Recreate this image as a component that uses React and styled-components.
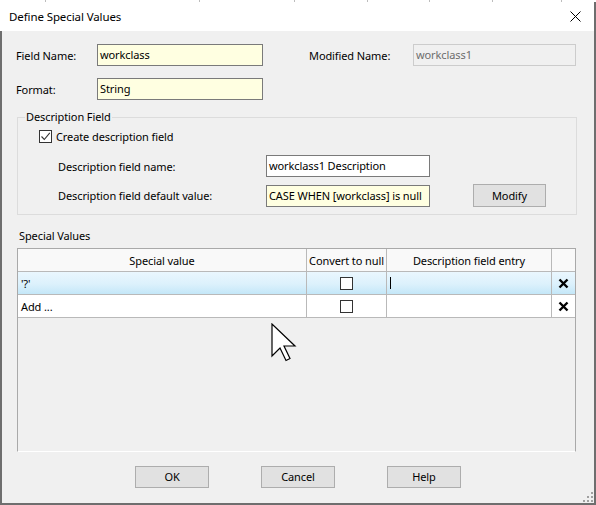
import React from 'react';
import styled, { createGlobalStyle } from 'styled-components';

const Global = createGlobalStyle`
  html, body { margin: 0; padding: 0; background: #ffffff; }
  body {
    font-family: "Noto Sans", "Liberation Sans", sans-serif;
    font-size: 11px;
    letter-spacing: -0.1px;
    color: #000;
  }
  * { box-sizing: border-box; }
`;

const Screen = styled.div`
  position: relative;
  width: 596px;
  height: 505px;
  display: flex;
  flex-direction: column;
  overflow: hidden;
`;

const BehindStrip = styled.div`
  height: 2px;
  display: flex;
  background: #ffffff;
  flex: none;
`;

const BehindCell = styled.div`
  flex: none;
  width: ${p => p.$w}px;
  border-right: 1px solid #bdbdbd;
`;

const Window = styled.div`
  flex: 1;
  display: flex;
  flex-direction: column;
  border-right: 2px solid #6e6e6e;
  border-bottom: 2px solid #6e6e6e;
`;

const TitleBar = styled.div`
  height: 29px;
  flex: none;
  background: #ffffff;
  display: flex;
  align-items: center;
  justify-content: space-between;
  padding-left: 9px;
  font-size: 11.5px;
`;

const CloseBtn = styled.div`
  width: 38px;
  height: 29px;
  display: flex;
  align-items: center;
  justify-content: center;
`;

const Body = styled.div`
  position: relative;
  flex: 1;
  background: #f0f0f0;
  border-left: 2px solid #6e6e6e;
  padding: 13px 0 0 14px;
  display: flex;
  flex-direction: column;
`;

const FieldRow = styled.div`
  display: flex;
  align-items: center;
  height: ${p => p.$h || 22}px;
  margin-top: ${p => p.$mt || 0}px;
  padding-left: ${p => p.$pl || 0}px;
`;

const Label = styled.span`
  flex: none;
  width: ${p => p.$w}px;
  margin-left: ${p => p.$ml || 0}px;
  white-space: nowrap;
`;

const boxColors = {
  yellow: { bg: '#ffffe1', border: '#7a7a7a', color: '#000' },
  white: { bg: '#ffffff', border: '#7a7a7a', color: '#000' },
  disabled: { bg: '#f0f0f0', border: '#cccccc', color: '#6d6d6d' },
};

const TextBox = styled.div`
  flex: none;
  width: ${p => p.$w}px;
  height: 22px;
  border: 1px solid ${p => boxColors[p.$variant].border};
  background: ${p => boxColors[p.$variant].bg};
  color: ${p => boxColors[p.$variant].color};
  padding: 0 0 1px 2px;
  display: flex;
  align-items: center;
  overflow: hidden;
  white-space: nowrap;
`;

const Group = styled.div`
  margin: 17px 0 0 1px;
  width: 560px;
  border: 1px solid #dcdcdc;
  padding-bottom: 7px;
  display: flex;
  flex-direction: column;
`;

const Legend = styled.span`
  align-self: flex-start;
  margin: -9px 0 0 7px;
  padding: 0 1px;
  line-height: 16px;
  height: 16px;
  background: #f0f0f0;
`;

const CheckBox = styled.span`
  flex: none;
  width: 13px;
  height: 13px;
  border: 1px solid #333333;
  background: #ffffff;
  display: inline-flex;
  align-items: center;
  justify-content: center;
`;

const CheckText = styled.span`
  margin-left: 4px;
  white-space: nowrap;
`;

const Button = styled.div`
  flex: none;
  width: ${p => p.$w || 74}px;
  height: ${p => p.$h || 22}px;
  margin-left: ${p => p.$ml || 0}px;
  background: #e1e1e1;
  border: 1px solid #adadad;
  display: flex;
  align-items: center;
  justify-content: center;
  padding-bottom: 1px;
`;

const SectionTitle = styled.div`
  margin: 13px 0 0 3px;
  line-height: 16px;
  height: 16px;
`;

const Table = styled.div`
  margin: 4px 0 0 1px;
  width: 559px;
  height: 204px;
  border: 1px solid #a9a9a9;
  border-bottom-color: #ffffff;
  background: #f0f0f0;
  display: flex;
  flex-direction: column;
`;

const GridRow = styled.div`
  display: grid;
  grid-template-columns: 289px 80px 165px 23px;
  height: 23px;
  border-bottom: 1px solid #b9b9b9;
  background: ${p =>
    p.$kind === 'header'
      ? '#f9f9f9'
      : p.$kind === 'selected'
      ? 'linear-gradient(to bottom, #eaf7fe 0%, #dcf1fc 55%, #c4e7f8 100%)'
      : '#ffffff'};
`;

const Cell = styled.div`
  display: flex;
  align-items: center;
  justify-content: ${p => (p.$center ? 'center' : 'flex-start')};
  padding-left: ${p => (p.$center ? 0 : 3)}px;
  border-right: ${p => (p.$last ? 'none' : '1px solid #b9b9b9')};
  white-space: nowrap;
  overflow: hidden;
`;

const Caret = styled.span`
  width: 1px;
  height: 12px;
  background: #000;
`;

const ButtonBar = styled.div`
  margin-top: 14px;
  display: flex;
  justify-content: center;
  gap: 52px;
  padding-right: 14px;
`;

const Pointer = styled.svg`
  position: absolute;
  left: 271px;
  top: 323px;
  pointer-events: none;
`;

const Grip = styled.svg`
  position: absolute;
  right: 1px;
  bottom: 1px;
`;

const DeleteX = () => (
  <svg width="11" height="11" viewBox="0 0 11 11">
    <path d="M1.5 1.5 L9.5 9.5 M9.5 1.5 L1.5 9.5" stroke="#000" strokeWidth="2.4" strokeLinecap="butt" />
  </svg>
);

const Tick = () => (
  <svg width="11" height="11" viewBox="0 0 11 11">
    <path d="M1.5 5.5 L4.3 8.5 L9.8 1.8" fill="none" stroke="#333" strokeWidth="1.1" />
  </svg>
);

const rows = [
  { value: "'?'", kind: 'selected', caret: true },
  { value: 'Add ...', kind: 'plain', caret: false },
];

export default function App() {
  return (
    <>
      <Global />
      <Screen>
        <BehindStrip>
          <BehindCell $w={46} />
          <BehindCell $w={154} />
          <BehindCell $w={95} />
          <BehindCell $w={73} />
          <BehindCell $w={62} />
          <BehindCell $w={63} />
          <BehindCell $w={69} />
        </BehindStrip>
        <Window>
          <TitleBar>
            <span>Define Special Values</span>
            <CloseBtn>
              <svg width="11" height="11" viewBox="0 0 11 11">
                <path d="M0.5 0.5 L10.5 10.5 M10.5 0.5 L0.5 10.5" stroke="#000" strokeWidth="1" />
              </svg>
            </CloseBtn>
          </TitleBar>
          <Body>
            <FieldRow>
              <Label $w={81}>Field Name:</Label>
              <TextBox $w={166} $variant="yellow">workclass</TextBox>
              <Label $w={104} $ml={46}>Modified Name:</Label>
              <TextBox $w={163} $variant="disabled">workclass1</TextBox>
            </FieldRow>
            <FieldRow $mt={12}>
              <Label $w={81}>Format:</Label>
              <TextBox $w={166} $variant="yellow">String</TextBox>
            </FieldRow>

            <Group>
              <Legend>Description Field</Legend>
              <FieldRow $h={13} $mt={5} $pl={21}>
                <CheckBox><Tick /></CheckBox>
                <CheckText>Create description field</CheckText>
              </FieldRow>
              <FieldRow $mt={12} $pl={40}>
                <Label $w={208}>Description field name:</Label>
                <TextBox $w={164} $variant="white">workclass1 Description</TextBox>
              </FieldRow>
              <FieldRow $h={23} $mt={7} $pl={40}>
                <Label $w={208}>Description field default value:</Label>
                <TextBox $w={164} $variant="yellow">CASE WHEN [workclass] is null</TextBox>
                <Button $w={73} $h={23} $ml={43}>Modify</Button>
              </FieldRow>
            </Group>

            <SectionTitle>Special Values</SectionTitle>
            <Table>
              <GridRow $kind="header">
                <Cell $center>Special value</Cell>
                <Cell $center>Convert to null</Cell>
                <Cell $center>Description field entry</Cell>
                <Cell $last />
              </GridRow>
              {rows.map(r => (
                <GridRow key={r.value} $kind={r.kind}>
                  <Cell>{r.value}</Cell>
                  <Cell $center><CheckBox /></Cell>
                  <Cell>{r.caret && <Caret />}</Cell>
                  <Cell $center $last><DeleteX /></Cell>
                </GridRow>
              ))}
            </Table>

            <ButtonBar>
              <Button>OK</Button>
              <Button>Cancel</Button>
              <Button>Help</Button>
            </ButtonBar>

            <Grip width="10" height="10" viewBox="0 0 10 10">
              <g fill="#a0a0a0">
                <rect x="8" y="0" width="2" height="2" />
                <rect x="4" y="4" width="2" height="2" />
                <rect x="8" y="4" width="2" height="2" />
                <rect x="0" y="8" width="2" height="2" />
                <rect x="4" y="8" width="2" height="2" />
                <rect x="8" y="8" width="2" height="2" />
              </g>
            </Grip>
          </Body>
        </Window>
        <Pointer width="26" height="40" viewBox="0 0 26 40">
          <path
            d="M1 1 L1 33 L9 25 L15 37.5 L19 35.5 L13 23 L24 23 Z"
            fill="#ffffff"
            stroke="#000000"
            strokeWidth="1.2"
            strokeLinejoin="miter"
          />
        </Pointer>
      </Screen>
    </>
  );
}
